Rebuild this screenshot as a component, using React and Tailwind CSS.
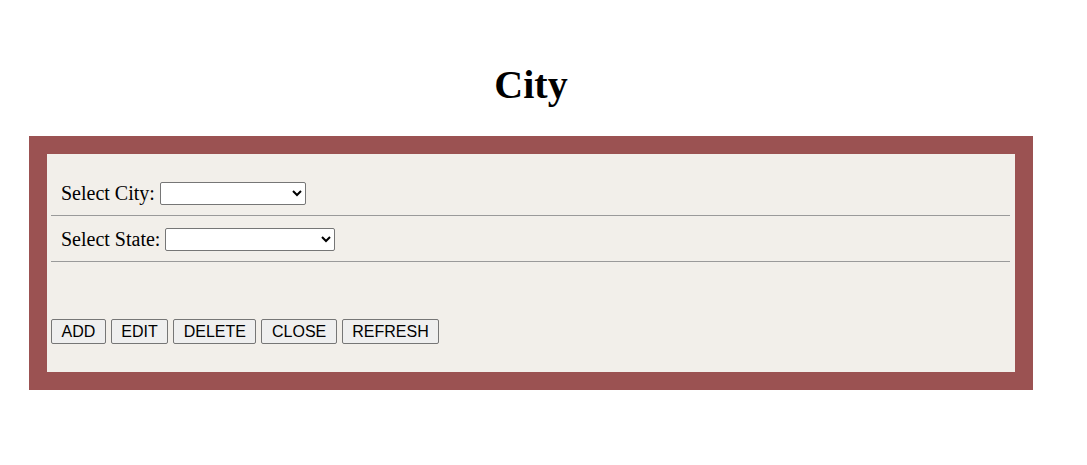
export default function App() {
  const rows = [
    { label: 'Select City:', width: 'w-[146px]' },
    { label: 'Select State:', width: 'w-[170px]' }
  ]
  const buttons = ['ADD', 'EDIT', 'DELETE', 'CLOSE', 'REFRESH']

  return (
    <div className="min-h-[465px] bg-white font-['Liberation_Serif',serif] text-black">
      <div className="ml-[29px] w-[1004px] pt-[62px]">
        <h1 className="text-center text-[40px] font-bold leading-[46px]">City</h1>

        <div className="mt-[28px] border-[18px] border-[#9b5252] bg-[#f2efea] pl-[4px] pr-[5px] pt-[16px] pb-[28px]">
          {rows.map((row) => (
            <div key={row.label} className="flex h-[46px] items-center border-b border-[#9a9a9a] pl-[10px] pt-[1px] text-[20px] leading-[23px]">
              <span>{row.label}</span>
              <select className={`ml-[5px] h-[23px] ${row.width} rounded-[2px] border border-[#767676] bg-white font-['Liberation_Sans',sans-serif] text-[13.33px]`}>
                <option></option>
              </select>
            </div>
          ))}

          <div className="mt-[57px] flex gap-[5px]">
            {buttons.map((b) => (
              <button
                key={b}
                className="h-[25px] rounded-[2px] border border-[#767676] bg-[#efefef] px-[9.5px] font-['Liberation_Sans',sans-serif] text-[16px] leading-[18px] text-black"
              >
                {b}
              </button>
            ))}
          </div>
        </div>
      </div>
    </div>
  )
}
